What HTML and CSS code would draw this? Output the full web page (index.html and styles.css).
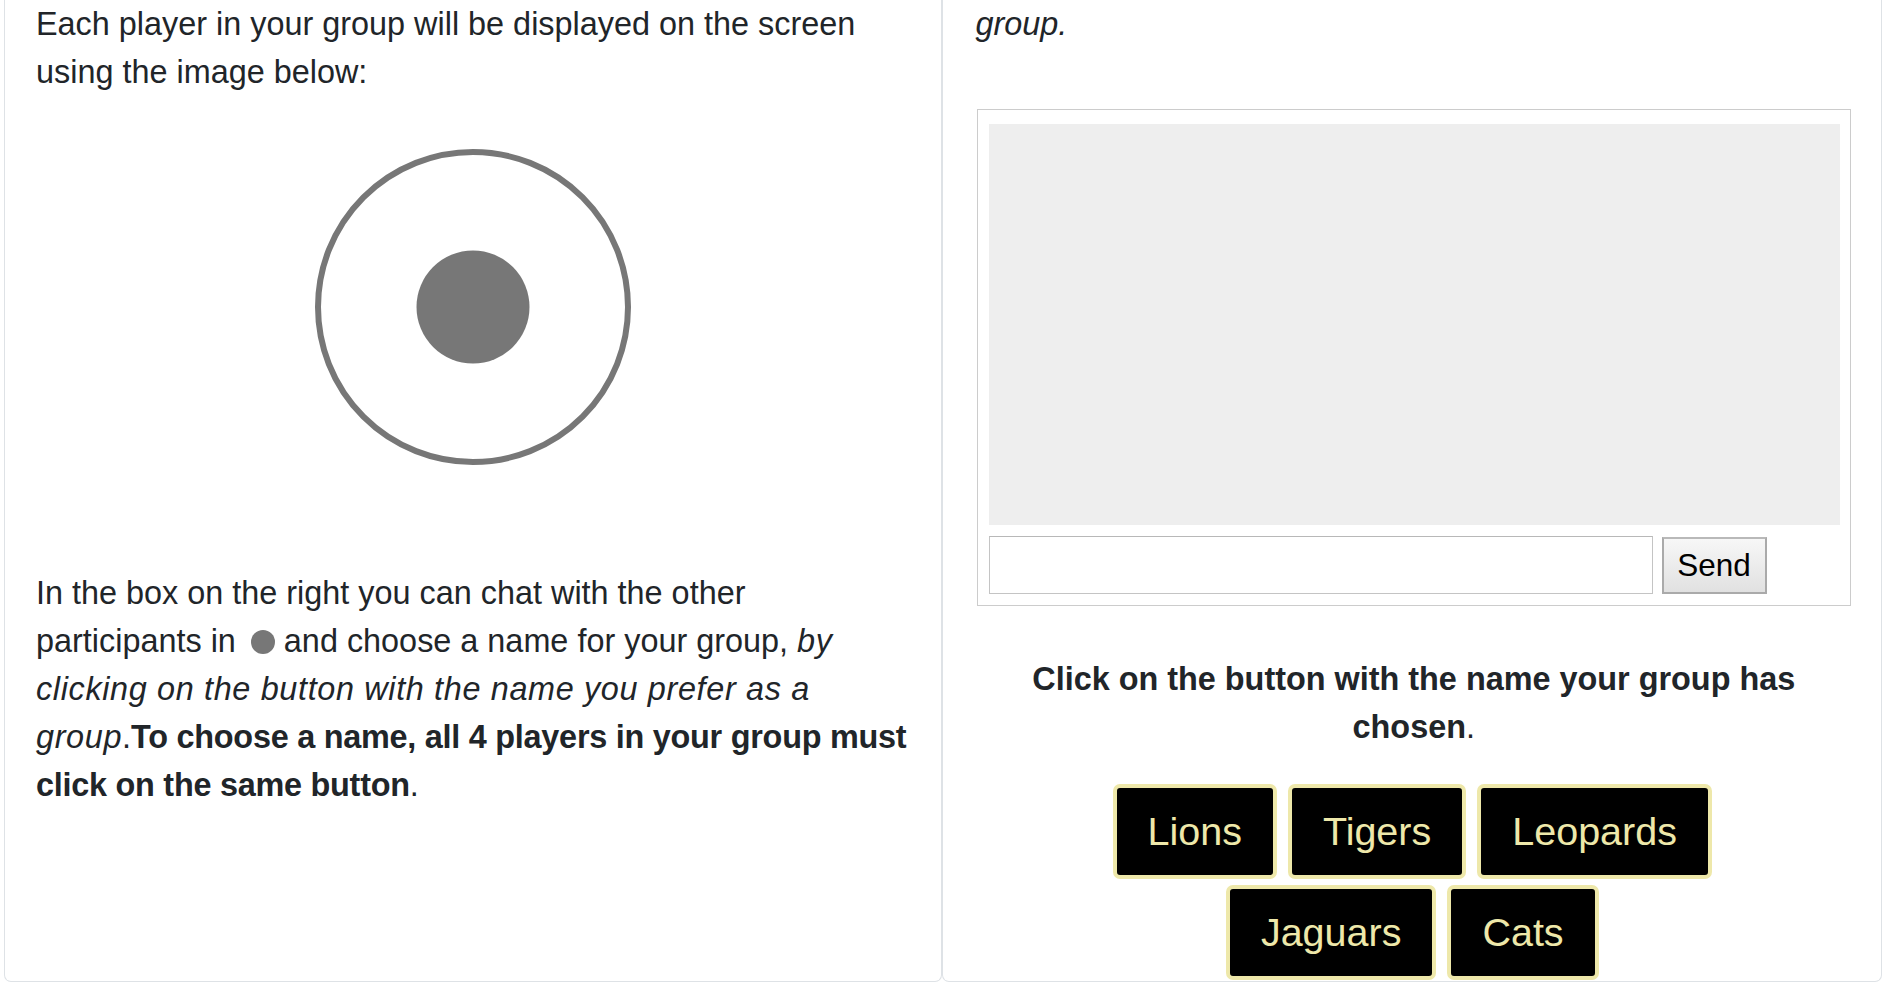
FILE: index.html
```html
<!DOCTYPE html>
<html lang="en">
<head>
<meta charset="utf-8">
<title>Choose a group name</title>
<link rel="stylesheet" href="styles.css">
</head>
<body>
<div class="row">
  <section class="card card-left">
    <p class="intro">Each player in your group will be displayed on the screen using the image below:</p>
    <svg class="avatar" width="320" height="320" viewBox="0 0 320 320">
      <circle cx="160" cy="160" r="155" fill="none" stroke="#777777" stroke-width="6"/>
      <circle cx="160" cy="160" r="56.5" fill="#777777"/>
    </svg>
    <p class="instructions">In the box on the right you can chat with the other participants in <span class="dot"></span> and choose a name for your group, <em>by clicking on the button with the name you prefer as a group</em>.<strong>To choose a name, all 4 players in your group must click on the same button</strong>.</p>
  </section>
  <section class="card card-right">
    <p class="tail"><em>group.</em></p>
    <div class="chat">
      <div class="chat-log"></div>
      <div class="chat-controls">
        <input type="text" class="chat-input">
        <button class="send" type="button">Send</button>
      </div>
    </div>
    <p class="prompt"><strong>Click on the button with the name your group has chosen</strong>.</p>
    <div class="choices">
      <button class="choice" type="button">Lions</button>
      <button class="choice" type="button">Tigers</button>
      <button class="choice" type="button">Leopards</button>
      <button class="choice" type="button">Jaguars</button>
      <button class="choice" type="button">Cats</button>
    </div>
  </section>
</div>
</body>
</html>
```

FILE: styles.css
```css
html, body {
  margin: 0;
  padding: 0;
  background: #ffffff;
}

body {
  font-family: "Liberation Sans", Arial, Helvetica, sans-serif;
  font-size: 32.4px;
  line-height: 48px;
  color: #212529;
}

.row {
  display: flex;
  padding: 0 4px 4px;
}

.card {
  flex: 1 1 0;
  min-width: 0;
  border: 1px solid #dee2e6;
  border-top: none;
  border-radius: 0 0 7px 7px;
  box-sizing: border-box;
}

.card-left {
  padding: 0 27px 1px 31px;
}

.card-right {
  padding: 0 30px 1px 31px;
}

p {
  margin: 0;
}

.tail {
  padding-left: 2px;
}

.avatar {
  display: block;
  margin: 51px auto 0;
  position: relative;
  left: -2px;
}

.instructions {
  margin-top: 102px;
}

.instructions em {
  letter-spacing: 0.65px;
}

.instructions strong {
  letter-spacing: -0.25px;
}

.dot {
  display: inline-block;
  width: 24px;
  height: 24px;
  margin-left: 6px;
  border-radius: 50%;
  background: #777777;
  vertical-align: -2px;
}

.chat {
  margin: 61px 0 0 3px;
  border: 1px solid #cccccc;
  padding: 14px 10px 11px 11px;
}

.chat-log {
  height: 401px;
  background: #eeeeee;
}

.chat-controls {
  display: flex;
  align-items: flex-start;
  margin-top: 11px;
}

.chat-input {
  box-sizing: border-box;
  width: 664px;
  height: 58px;
  margin: 0;
  border: 1px solid #c4c4c4;
  border-top-color: #b8b8b8;
  background: #ffffff;
  font: inherit;
  padding: 0 8px;
}

.send {
  box-sizing: border-box;
  width: 105px;
  height: 57px;
  margin: 1px 0 0 9px;
  padding: 0;
  border: 2px solid #aaaaaa;
  border-top-color: #b9b9b9;
  background: linear-gradient(#f7f7f7, #e1e1e1);
  font-family: "Liberation Sans", Arial, Helvetica, sans-serif;
  font-size: 31.5px;
  color: #000000;
}

.prompt {
  margin-top: 49px;
  padding-left: 3px;
  text-align: center;
}

.choices {
  display: flex;
  flex-wrap: wrap;
  justify-content: center;
  gap: 6px 11px;
  max-width: 720px;
  margin: 33px auto 0;
}

.choice {
  box-sizing: border-box;
  margin: 0;
  padding: 15px 31px;
  border: 4px solid #eee8aa;
  border-radius: 7px;
  background: #000000;
  color: #eee8aa;
  font-family: "Liberation Sans", Arial, Helvetica, sans-serif;
  font-size: 39.5px;
  line-height: 57px;
}
```
